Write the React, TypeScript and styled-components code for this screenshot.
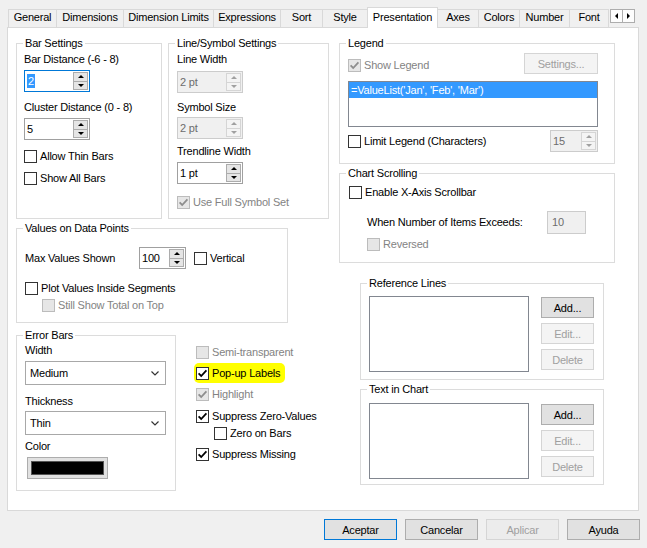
import React from "react";
import styled, { createGlobalStyle } from "styled-components";

const GlobalStyle = createGlobalStyle`
  html, body { margin: 0; padding: 0; background: #f0f0f0; overflow: hidden; }
  body {
    font-family: "Liberation Sans", Arial, sans-serif;
    font-size: 11px;
    letter-spacing: -0.2px;
    color: #000;
  }
  * { box-sizing: border-box; }
`;

const tabs: { label: string; w: number; active?: boolean }[] = [
  { label: "General", w: 49 },
  { label: "Dimensions", w: 68 },
  { label: "Dimension Limits", w: 91 },
  { label: "Expressions", w: 68 },
  { label: "Sort", w: 43 },
  { label: "Style", w: 46 },
  { label: "Presentation", w: 71, active: true },
  { label: "Axes", w: 42 },
  { label: "Colors", w: 42 },
  { label: "Number", w: 51 },
  { label: "Font", w: 40 },
];

const CheckMark = ({ color }: { color: string }) => (
  <svg width="11" height="11" viewBox="0 0 11 11">
    <path d="M1.6 5.4 L4.2 8 L9.4 2.4" fill="none" stroke={color} strokeWidth="1.8" />
  </svg>
);

type CheckProps = {
  checked?: boolean;
  disabled?: boolean;
  mt?: number;
  ml?: number;
  children: React.ReactNode;
};

const Check = ({ checked, disabled, mt = 0, ml = 0, children }: CheckProps) => (
  <CheckRow $mt={mt} $ml={ml} $disabled={disabled}>
    <CheckBox $disabled={disabled}>
      {checked && <CheckMark color={disabled ? "#8d8d8d" : "#000"} />}
    </CheckBox>
    <span>{children}</span>
  </CheckRow>
);

type SpinProps = {
  value: string;
  w: number;
  mt?: number;
  focus?: boolean;
  disabled?: boolean;
};

const Spin = ({ value, w, mt = 0, focus, disabled }: SpinProps) => (
  <SpinBox $w={w} $mt={mt} $focus={focus} $disabled={disabled}>
    <SpinValue $disabled={disabled}>
      {focus ? <Selected>{value}</Selected> : value}
    </SpinValue>
    <SpinButtons>
      <SpinArrow $disabled={disabled}>
        <Tri $up $disabled={disabled} />
      </SpinArrow>
      <SpinArrow $disabled={disabled}>
        <Tri $disabled={disabled} />
      </SpinArrow>
    </SpinButtons>
  </SpinBox>
);

const Combo = ({ value, mt }: { value: string; mt: number }) => (
  <Select $mt={mt}>
    <span>{value}</span>
    <svg width="8" height="5" viewBox="0 0 8 5">
      <path d="M0.5 0.5 L4 4 L7.5 0.5" fill="none" stroke="#333" strokeWidth="1.2" />
    </svg>
  </Select>
);

const Group = ({
  title,
  w,
  h,
  pad,
  mt = 0,
  ml = 0,
  children,
}: {
  title: string;
  w: number;
  h: number;
  pad: string;
  mt?: number;
  ml?: number;
  children?: React.ReactNode;
}) => (
  <GroupBox $w={w} $h={h} $pad={pad} $mt={mt} $ml={ml}>
    <GroupTitle>{title}</GroupTitle>
    {children}
  </GroupBox>
);

const ListButtons = () => (
  <ButtonCol>
    <Button $w={53}>Add...</Button>
    <Button $w={53} $disabled>Edit...</Button>
    <Button $w={53} $disabled>Delete</Button>
  </ButtonCol>
);

export default function App() {
  return (
    <Window>
      <GlobalStyle />
      <TabStrip>
        {tabs.map((t) => (
          <Tab key={t.label} $w={t.w} $active={t.active}>
            {t.label}
          </Tab>
        ))}
        <Scroller>
          <ScrollBtn>
            <SideTri $left />
          </ScrollBtn>
          <ScrollBtn>
            <SideTri />
          </ScrollBtn>
        </Scroller>
      </TabStrip>

      <TabPage>
        <LeftArea>
          <Row>
            <Group title="Bar Settings" w={146} h={176} pad="9px 7px">
              <Label>Bar Distance (-6 - 8)</Label>
              <Spin value="2" w={66} mt={4} focus />
              <Label $mt={9}>Cluster Distance (0 - 8)</Label>
              <Spin value="5" w={66} mt={4} />
              <Check mt={10}>Allow Thin Bars</Check>
              <Check mt={9}>Show All Bars</Check>
            </Group>
            <Group title="Line/Symbol Settings" w={161} h={176} pad="9px 8px" ml={6}>
              <Label>Line Width</Label>
              <Spin value="2 pt" w={66} mt={5} disabled />
              <Label $mt={8}>Symbol Size</Label>
              <Spin value="2 pt" w={66} mt={3} disabled />
              <Label $mt={6}>Trendline Width</Label>
              <Spin value="1 pt" w={66} mt={4} />
              <Check mt={12} checked disabled>
                Use Full Symbol Set
              </Check>
            </Group>
          </Row>

          <Group title="Values on Data Points" w={272} h={95} pad="18px 8px" mt={9}>
            <Row $center>
              <InlineLabel $w={114}>Max Values Shown</InlineLabel>
              <Spin value="100" w={47} />
              <Check ml={8}>Vertical</Check>
            </Row>
            <Check mt={13}>Plot Values Inside Segments</Check>
            <Check mt={4} ml={17} disabled>
              Still Show Total on Top
            </Check>
          </Group>

          <Row>
            <Group title="Error Bars" w={160} h={156} pad="8px 8px" mt={12}>
              <Label>Width</Label>
              <Combo value="Medium" mt={4} />
              <Label $mt={10}>Thickness</Label>
              <Combo value="Thin" mt={3} />
              <Label $mt={5}>Color</Label>
              <ColorButton>
                <ColorSwatch />
              </ColorButton>
            </Group>
            <CheckColumn>
              <Check disabled>Semi-transparent</Check>
              <Highlight>
                <Check checked>Pop-up Labels</Check>
              </Highlight>
              <Check mt={5} checked disabled>
                Highlight
              </Check>
              <Check mt={9} checked>
                Suppress Zero-Values
              </Check>
              <Check mt={4} ml={18}>
                Zero on Bars
              </Check>
              <Check mt={8} checked>
                Suppress Missing
              </Check>
            </CheckColumn>
          </Row>
        </LeftArea>

        <RightArea>
          <Group title="Legend" w={276} h={121} pad="9px 16px 0 8px">
            <Row $center $between>
              <Check checked disabled mt={4}>
                Show Legend
              </Check>
              <Button $w={74} $disabled>
                Settings...
              </Button>
            </Row>
            <ListBox $w={250} $h={46} $mt={7}>
              <ListItem>=ValueList('Jan', 'Feb', 'Mar')</ListItem>
            </ListBox>
            <Row $center $between $mt={3}>
              <Check>Limit Legend (Characters)</Check>
              <Spin value="15" w={48} disabled />
            </Row>
          </Group>

          <Group title="Chart Scrolling" w={276} h={90} pad="12px 9px" mt={9}>
            <Check>Enable X-Axis Scrollbar</Check>
            <Row $center $mt={12}>
              <InlineLabel $w={180} $ml={18}>
                When Number of Items Exceeds:
              </InlineLabel>
              <TextInput>10</TextInput>
            </Row>
            <Check mt={4} ml={18} disabled>
              Reversed
            </Check>
          </Group>

          <Group title="Reference Lines" w={244} h={97} pad="12px 8px" mt={20} ml={21}>
            <Row>
              <ListBox $w={160} $h={76} />
              <ListButtons />
            </Row>
          </Group>

          <Group title="Text in Chart" w={244} h={96} pad="13px 8px" mt={9} ml={21}>
            <Row>
              <ListBox $w={160} $h={76} />
              <ListButtons />
            </Row>
          </Group>
        </RightArea>
      </TabPage>

      <Footer>
        <Button $w={73} $h={21} $primary>
          Aceptar
        </Button>
        <Button $w={73} $h={21}>
          Cancelar
        </Button>
        <Button $w={73} $h={21} $disabled $footer>
          Aplicar
        </Button>
        <Button $w={73} $h={21}>
          Ayuda
        </Button>
      </Footer>
    </Window>
  );
}

// Style
const Window = styled.div`
  width: 647px;
  height: 548px;
  padding: 7px 0 0 7px;
`;

const TabStrip = styled.div`
  display: flex;
  align-items: flex-end;
  height: 20px;
  padding-left: 2px;
`;

const Tab = styled.div<{ $w: number; $active?: boolean }>`
  position: relative;
  width: ${(p) => p.$w}px;
  height: ${(p) => (p.$active ? 21 : 18)}px;
  margin-left: -1px;
  margin-bottom: ${(p) => (p.$active ? -1 : 0)}px;
  padding-top: ${(p) => (p.$active ? 3 : 1)}px;
  border: 1px solid #d9d9d9;
  border-bottom: none;
  background: ${(p) => (p.$active ? "#fff" : "#f0f0f0")};
  z-index: ${(p) => (p.$active ? 1 : 0)};
  line-height: 13px;
  text-align: center;
  white-space: nowrap;
`;

const Scroller = styled.div`
  display: flex;
  align-self: flex-start;
  margin: 2px 0 0 1px;
`;

const ScrollBtn = styled.div`
  width: 13px;
  height: 14px;
  margin-right: -1px;
  border: 1px solid #adadad;
  background: #fdfdfd;
  display: flex;
  align-items: center;
  justify-content: center;
`;

const SideTri = styled.span<{ $left?: boolean }>`
  width: 0;
  height: 0;
  border-top: 3px solid transparent;
  border-bottom: 3px solid transparent;
  ${(p) => (p.$left ? "border-right: 3px solid #000;" : "border-left: 3px solid #000;")}
`;

const TabPage = styled.div`
  display: flex;
  width: 632px;
  height: 484px;
  padding: 15px 0 0 8px;
  border: 1px solid #d9d9d9;
  background: #fff;
`;

const LeftArea = styled.div`
  display: flex;
  flex-direction: column;
  width: 313px;
`;

const RightArea = styled.div`
  display: flex;
  flex-direction: column;
  margin-left: 10px;
  width: 276px;
`;

const Row = styled.div<{ $center?: boolean; $between?: boolean; $mt?: number }>`
  display: flex;
  align-self: stretch;
  align-items: ${(p) => (p.$center ? "center" : "flex-start")};
  justify-content: ${(p) => (p.$between ? "space-between" : "flex-start")};
  margin-top: ${(p) => p.$mt ?? 0}px;
`;

const GroupBox = styled.div<{ $w: number; $h: number; $pad: string; $mt: number; $ml: number }>`
  position: relative;
  flex: none;
  display: flex;
  flex-direction: column;
  align-items: flex-start;
  width: ${(p) => p.$w}px;
  height: ${(p) => p.$h}px;
  margin-top: ${(p) => p.$mt}px;
  margin-left: ${(p) => p.$ml}px;
  padding: ${(p) => p.$pad};
  border: 1px solid #dcdcdc;
`;

const GroupTitle = styled.span`
  position: absolute;
  top: -7px;
  left: 6px;
  padding: 0 2px;
  background: #fff;
  line-height: 13px;
  white-space: nowrap;
`;

const Label = styled.div<{ $mt?: number }>`
  line-height: 13px;
  margin-top: ${(p) => p.$mt ?? 0}px;
  white-space: nowrap;
`;

const InlineLabel = styled.span<{ $w: number; $ml?: number }>`
  width: ${(p) => p.$w}px;
  margin-left: ${(p) => p.$ml ?? 0}px;
  line-height: 13px;
  white-space: nowrap;
`;

const CheckRow = styled.div<{ $mt: number; $ml: number; $disabled?: boolean }>`
  display: flex;
  align-items: center;
  gap: 3px;
  height: 13px;
  margin-top: ${(p) => p.$mt}px;
  margin-left: ${(p) => p.$ml}px;
  line-height: 13px;
  white-space: nowrap;
  color: ${(p) => (p.$disabled ? "#838383" : "#000")};
`;

const CheckBox = styled.span<{ $disabled?: boolean }>`
  flex: none;
  width: 13px;
  height: 13px;
  border: 1px solid ${(p) => (p.$disabled ? "#bcbcbc" : "#333")};
  background: ${(p) => (p.$disabled ? "#e6e6e6" : "#fff")};
  display: flex;
  align-items: center;
  justify-content: center;
`;

const CheckColumn = styled.div`
  display: flex;
  flex-direction: column;
  align-items: flex-start;
  margin: 23px 0 0 20px;
`;

const Highlight = styled.div`
  margin: 4px 0 0 -2px;
  padding: 4px 5px 3px 2px;
  background: #ffff00;
  border-radius: 5px;
`;

const SpinBox = styled.div<{ $w: number; $mt: number; $focus?: boolean; $disabled?: boolean }>`
  flex: none;
  display: flex;
  width: ${(p) => p.$w}px;
  height: 22px;
  margin-top: ${(p) => p.$mt}px;
  border: 1px solid ${(p) => (p.$focus ? "#0078d7" : p.$disabled ? "#cccccc" : "#a0a0a0")};
  background: ${(p) => (p.$disabled ? "#f0f0f0" : "#fff")};
`;

const SpinValue = styled.div<{ $disabled?: boolean }>`
  flex: 1;
  padding: 3px 0 0 2px;
  line-height: 14px;
  color: ${(p) => (p.$disabled ? "#6d6d6d" : "#000")};
`;

const Selected = styled.span`
  display: inline-block;
  padding: 0 1px;
  background: #3399ff;
  color: #fff;
`;

const SpinButtons = styled.div`
  display: flex;
  flex-direction: column;
  width: 17px;
  padding: 1px;
`;

const SpinArrow = styled.div<{ $disabled?: boolean }>`
  flex: 1;
  display: flex;
  align-items: center;
  justify-content: center;
  border: 1px solid ${(p) => (p.$disabled ? "#d5d5d5" : "#acacac")};
  background: ${(p) => (p.$disabled ? "#f4f4f4" : "#e5e5e5")};
  & + & {
    margin-top: -1px;
  }
`;

const Tri = styled.span<{ $up?: boolean; $disabled?: boolean }>`
  width: 0;
  height: 0;
  border-left: 3px solid transparent;
  border-right: 3px solid transparent;
  ${(p) =>
    p.$up
      ? `border-bottom: 3px solid ${p.$disabled ? "#a0a0a0" : "#000"};`
      : `border-top: 3px solid ${p.$disabled ? "#a0a0a0" : "#000"};`}
`;

const Select = styled.div<{ $mt: number }>`
  display: flex;
  align-items: center;
  justify-content: space-between;
  width: 141px;
  height: 24px;
  margin-top: ${(p) => p.$mt}px;
  padding: 0 6px 0 4px;
  border: 1px solid #a8a8a8;
  background: #fff;
`;

const ColorButton = styled.div`
  width: 81px;
  height: 22px;
  margin: 4px 0 0 2px;
  padding: 3px;
  border: 1px solid #adadad;
  background: #e1e1e1;
`;

const ColorSwatch = styled.div`
  width: 100%;
  height: 100%;
  background: #000;
  border: 1px solid #555;
`;

const ListBox = styled.div<{ $w: number; $h: number; $mt?: number }>`
  flex: none;
  width: ${(p) => p.$w}px;
  height: ${(p) => p.$h}px;
  margin-top: ${(p) => p.$mt ?? 0}px;
  border: 1px solid #828790;
  background: #fff;
`;

const ListItem = styled.div`
  height: 16px;
  padding: 1px 0 0 2px;
  line-height: 14px;
  background: #3399ff;
  color: #fff;
  white-space: nowrap;
`;

const TextInput = styled.div`
  width: 39px;
  height: 23px;
  padding: 3px 0 0 4px;
  line-height: 14px;
  border: 1px solid #cccccc;
  background: #f0f0f0;
  color: #6d6d6d;
`;

const ButtonCol = styled.div`
  display: flex;
  flex-direction: column;
  gap: 5px;
  margin: 1px 0 0 12px;
`;

const Button = styled.div<{
  $w: number;
  $h?: number;
  $primary?: boolean;
  $disabled?: boolean;
  $footer?: boolean;
}>`
  flex: none;
  display: flex;
  align-items: center;
  justify-content: center;
  width: ${(p) => p.$w}px;
  height: ${(p) => p.$h ?? 21}px;
  border: 1px solid
    ${(p) => (p.$primary ? "#0078d7" : p.$disabled ? "#d5d5d5" : "#adadad")};
  background: ${(p) => (p.$disabled ? (p.$footer ? "#ececec" : "#f4f4f4") : "#e1e1e1")};
  color: ${(p) => (p.$disabled ? "#a0a0a0" : "#000")};
  white-space: nowrap;
`;

const Footer = styled.div`
  display: flex;
  justify-content: flex-end;
  gap: 8px;
  width: 633px;
  margin-top: 8px;
`;
